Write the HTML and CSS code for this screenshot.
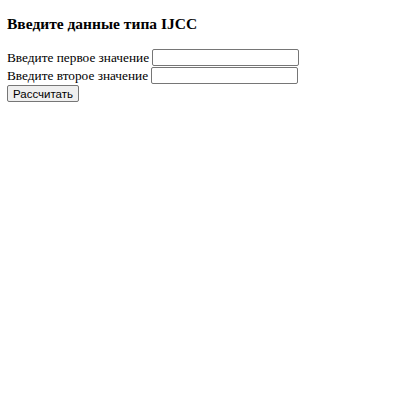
FILE: index.html
```html
<!DOCTYPE html>
<html>
<head>
<meta charset="utf-8">
<link rel="stylesheet" href="styles.css">
</head>
<body>
<h3 class="title">Введите данные типа IJCC</h3>
<form class="form">
<div class="row"><span class="label">Введите первое значение</span> <input class="field" type="text"></div>
<div class="row"><span class="label">Введите второе значение</span> <input class="field" type="text"></div>
<div class="row"><button class="btn" type="button">Рассчитать</button></div>
</form>
</body>
</html>
```
FILE: styles.css
```css
body {
  margin: 7px;
  font-family: "Liberation Serif", serif;
  font-size: 13.3px;
  color: #000;
  background: #fff;
}
.title {
  font-size: 15.5px;
  font-weight: bold;
  margin: 8px 0 15px;
  line-height: 18px;
}
.form {
  margin: 0;
}
.row {
  line-height: 17px;
  height: 18px;
}
.label {
  vertical-align: middle;
}
.field {
  box-sizing: border-box;
  width: 147px;
  height: 17px;
  border: 1px solid #767676;
  border-radius: 2px;
  padding: 0 2px;
  margin: 0;
  vertical-align: middle;
}
.btn {
  box-sizing: border-box;
  font-family: "Liberation Sans", Arial, sans-serif;
  font-size: 11.5px;
  height: 17px;
  padding: 0 5px;
  border: 1px solid #767676;
  border-radius: 2px;
  background: #efefef;
  margin: 0;
  vertical-align: middle;
}
```
